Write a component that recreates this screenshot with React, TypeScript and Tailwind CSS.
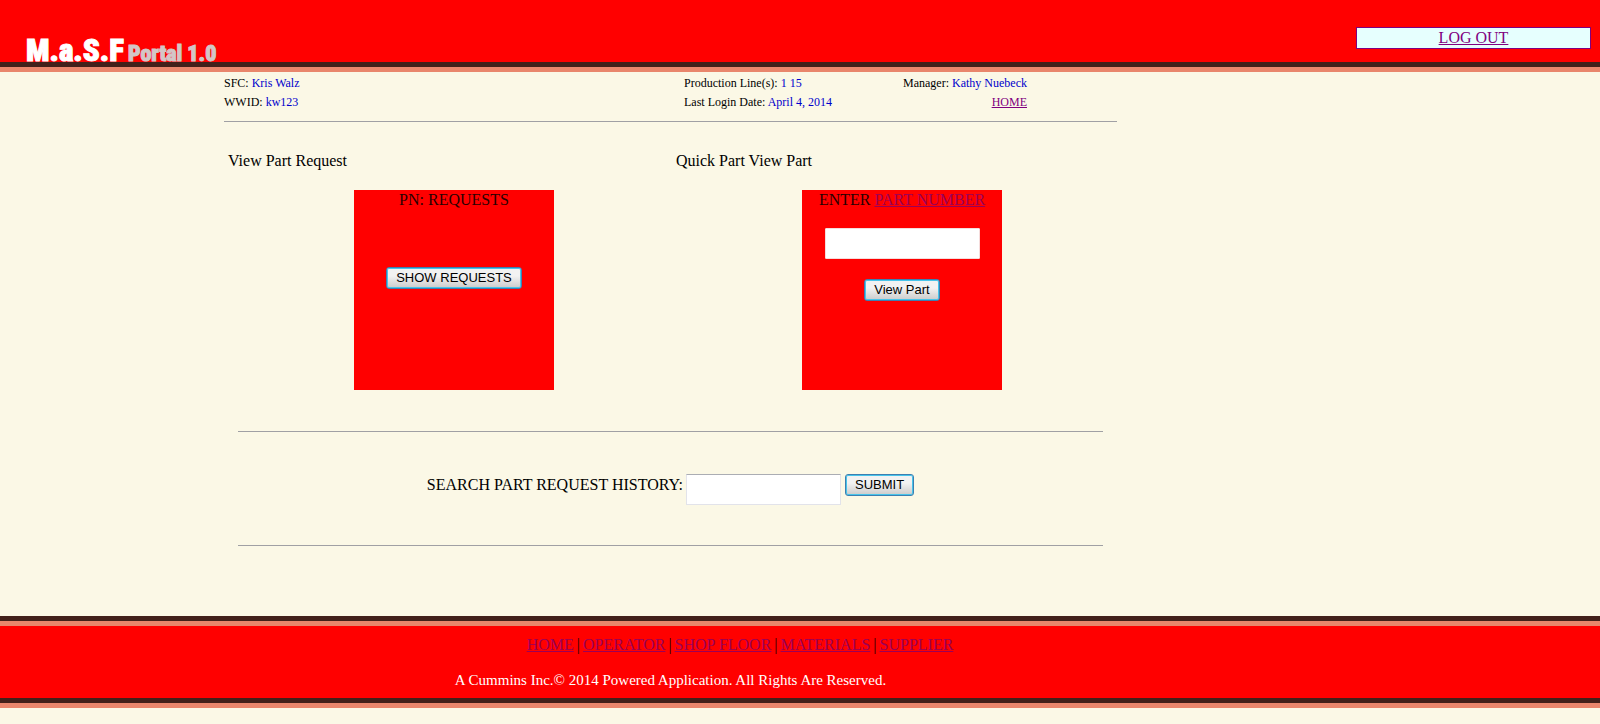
import type { ReactNode } from "react";

const LINKS = ["HOME", "OPERATOR", "SHOP FLOOR", "MATERIALS", "SUPPLIER"];

function ActionButton({ children }: { children: ReactNode }) {
  return (
    <button
      type="button"
      className="h-[22px] rounded-[3px] border border-[#3c7fb1] bg-linear-to-b from-[#f2f2f2] from-40% to-[#cbcbcb] px-[9px] font-['Liberation_Sans',sans-serif] text-[13px] leading-[18px] whitespace-nowrap text-black shadow-[inset_0_0_0_1px_#48c4ea]"
    >
      {children}
    </button>
  );
}

function Field({ label, value }: { label: string; value: string }) {
  return (
    <div>
      {label}: <span className="text-[#0000cc]">{value}</span>
    </div>
  );
}

export default function App() {
  return (
    <div className="min-h-screen bg-[#fbf8e6] font-['Liberation_Serif',serif] text-base leading-5 text-black">
      <header className="border-b-5 border-[#e9866c]">
        <div className="flex h-[67px] items-end justify-between border-b-5 border-[#42201a] bg-[#ff0000] pr-[9px] pl-[26px]">
          <h1 className="flex items-baseline gap-1 font-[Impact,'Roboto_Condensed',Roboto,sans-serif] leading-4 font-black whitespace-nowrap">
            <span className="text-[31px] text-white [-webkit-text-stroke:1px_white]">M.a.S.F</span>
            <span className="text-[22px] text-[#d3c6c6] [-webkit-text-stroke:1px_#d3c6c6]">Portal 1.0</span>
          </h1>
          <a
            href="#logout"
            className="mb-[13px] w-[235px] border border-[#800080] bg-[#e6fffe] text-center text-[#800080] underline"
          >
            LOG OUT
          </a>
        </div>
      </header>

      <main className="ml-[14%] max-w-[893px]">
        <section className="flex border-b border-[#a0a0a4] pt-[2px] pb-[9px] text-[12px] leading-[19px]">
          <div className="w-[460px]">
            <Field label="SFC" value="Kris Walz" />
            <Field label="WWID" value="kw123" />
          </div>
          <div className="w-[219px]">
            <Field label="Production Line(s)" value="1 15" />
            <Field label="Last Login Date" value="April 4, 2014" />
          </div>
          <div className="text-right">
            <Field label="Manager" value="Kathy Nuebeck" />
            <a href="#home" className="text-[#800080] underline">HOME</a>
          </div>
        </section>

        <div className="flex pt-[29px] pb-[41px] pl-1">
          <section className="w-[448px]">
            <h2>View Part Request</h2>
            <div className="mt-[19px] ml-[126px] flex h-[200px] w-[200px] flex-col items-center bg-[#ff0000]">
              <p className="mb-[57px] text-[#2a0000]">PN: REQUESTS</p>
              <ActionButton>SHOW REQUESTS</ActionButton>
            </div>
          </section>
          <section>
            <h2>Quick Part View Part</h2>
            <form className="mt-[19px] ml-[126px] flex h-[200px] w-[200px] flex-col items-center bg-[#ff0000]">
              <label htmlFor="part" className="text-[#2a0000]">
                ENTER <a href="#part" className="text-[#9b0058] underline">PART NUMBER</a>
              </label>
              <input id="part" className="mt-[18px] mb-5 h-[31px] w-[155px] rounded-[1px] border border-[#f5dcdc] bg-white px-1" />
              <ActionButton>View Part</ActionButton>
            </form>
          </section>
        </div>

        <form className="mx-[14px] mb-[70px] flex items-start justify-center border-y border-[#a0a0a4] pt-[42px] pb-[40px]">
          <label htmlFor="history" className="leading-[22px]">SEARCH PART REQUEST HISTORY:</label>
          <input id="history" className="mr-1 ml-[3px] h-[31px] w-[155px] border border-[#e2e3ea] border-t-[#abadb3] bg-white px-1" />
          <ActionButton>SUBMIT</ActionButton>
        </form>
      </main>

      <footer className="border-b-5 border-[#e9866c]">
        <div className="border-y-5 border-[#42201a] bg-[#ff0000]">
          <div className="border-t-5 border-[#e9866c]">
            <div className="ml-[14%] max-w-[893px] pt-[9px] pb-[8px] text-center">
              <nav className="flex justify-center gap-[3px] pl-[139px] text-[#9b0058]">
                {LINKS.map((link, i) => (
                  <span key={link} className="flex gap-[3px]">
                    {i > 0 && <span className="text-[#2a0000]">|</span>}
                    <a href={"#" + link.toLowerCase().replace(" ", "-")} className="underline">{link}</a>
                  </span>
                ))}
              </nav>
              <p className="mt-[15px] text-[15px] text-white">A Cummins Inc.© 2014 Powered Application. All Rights Are Reserved.</p>
            </div>
          </div>
        </div>
      </footer>
    </div>
  );
}
